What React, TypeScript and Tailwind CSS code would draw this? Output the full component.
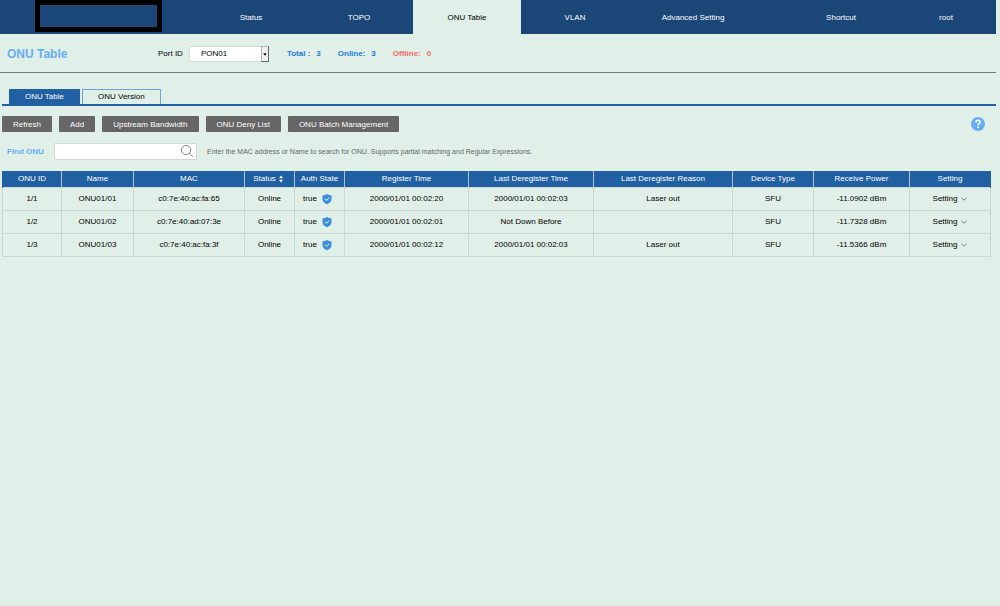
import React, { useState } from 'react';

interface Onu {
  id: string;
  name: string;
  mac: string;
  status: string;
  auth: string;
  registerTime: string;
  deregisterTime: string;
  deregisterReason: string;
  deviceType: string;
  power: string;
}

const ONUS: Onu[] = [
  {
    id: '1/1', name: 'ONU01/01', mac: 'c0:7e:40:ac:fa:65', status: 'Online', auth: 'true',
    registerTime: '2000/01/01 00:02:20', deregisterTime: '2000/01/01 00:02:03',
    deregisterReason: 'Laser out', deviceType: 'SFU', power: '-11.0902 dBm',
  },
  {
    id: '1/2', name: 'ONU01/02', mac: 'c0:7e:40:ad:07:3e', status: 'Online', auth: 'true',
    registerTime: '2000/01/01 00:02:01', deregisterTime: 'Not Down Before',
    deregisterReason: '', deviceType: 'SFU', power: '-11.7328 dBm',
  },
  {
    id: '1/3', name: 'ONU01/03', mac: 'c0:7e:40:ac:fa:3f', status: 'Online', auth: 'true',
    registerTime: '2000/01/01 00:02:12', deregisterTime: '2000/01/01 00:02:03',
    deregisterReason: 'Laser out', deviceType: 'SFU', power: '-11.5366 dBm',
  },
];

const NAV = [
  { label: 'Status', className: 'w-[108px] text-white' },
  { label: 'TOPO', className: 'w-[108px] text-white' },
  { label: 'ONU Table', className: 'w-[108px] bg-[#e0efe7] text-black' },
  { label: 'VLAN', className: 'w-[108px] text-white' },
  { label: 'Advanced Setting', className: 'w-[128px] text-white' },
  { label: 'Shortcut', className: 'w-[110px] ml-auto text-white' },
  { label: 'root', className: 'w-[100px] text-white' },
];

const ACTIONS = ['Refresh', 'Add', 'Upstream Bandwidth', 'ONU Deny List', 'ONU Batch Management'];

const COLUMNS = [
  { label: 'ONU ID', width: 'w-[59px]' },
  { label: 'Name', width: 'w-[72px]' },
  { label: 'MAC', width: 'w-[111px]' },
  { label: 'Status', width: 'w-[50px]', sortable: true },
  { label: 'Auth State', width: 'w-[50px]' },
  { label: 'Register Time', width: 'w-[124px]' },
  { label: 'Last Deregister Time', width: 'w-[125px]' },
  { label: 'Last Deregister Reason', width: 'w-[139px]' },
  { label: 'Device Type', width: 'w-[81px]' },
  { label: 'Receive Power', width: 'w-[96px]' },
  { label: 'Setting', width: 'w-[81px]' },
];

const SortIcon = () => (
  <svg viewBox="0 0 6 8" className="w-[6px] h-2" fill="currentColor" aria-hidden="true">
    <path d="M3 0.6 5 3.2H1z" />
    <path d="M3 7.4 1 4.8h4z" />
  </svg>
);

const ShieldIcon = () => (
  <svg viewBox="0 0 10 12" className="w-[10px] h-3" aria-hidden="true">
    <path
      d="M5 0.9C6.2 1.8 7.8 2.1 9.5 2.2V6c0 2.5-1.8 4.2-4.5 5.2C2.3 10.2 0.5 8.5 0.5 6V2.2C2.2 2.1 3.8 1.8 5 0.9z"
      fill="#3a8de0"
    />
    <path d="M3 5.9 4.5 7.3 7.1 4.8" fill="none" stroke="#fff" strokeWidth="1" />
  </svg>
);

const SearchIcon = () => (
  <svg viewBox="0 0 14 14" className="w-[14px] h-[14px]" fill="none" stroke="#777" strokeWidth="0.9" aria-hidden="true">
    <circle cx="6" cy="6" r="4.6" />
    <path d="M9.3 9.3 13 12.8" />
  </svg>
);

const HelpIcon = () => (
  <svg viewBox="0 0 14 14" className="w-[14px] h-[14px]" aria-hidden="true">
    <circle cx="7" cy="7" r="7" fill="#67adf3" />
    <path
      d="M4.9 5.4C4.9 4.1 5.8 3.3 7 3.3s2.1 0.8 2.1 1.9c0 1.4-2 1.5-2 3"
      fill="none"
      stroke="#fff"
      strokeWidth="1.5"
    />
    <circle cx="7.1" cy="10.2" r="0.9" fill="#fff" />
  </svg>
);

const ChevronIcon = () => (
  <svg viewBox="0 0 6 4" className="w-[6px] h-1" fill="none" stroke="#555" strokeWidth="0.7" aria-hidden="true">
    <path d="M0.5 0.8 3 3.2 5.5 0.8" />
  </svg>
);

export default function App() {
  const [port, setPort] = useState('PON01');
  const [search, setSearch] = useState('');
  const [tab, setTab] = useState('ONU Table');
  const [descending, setDescending] = useState(false);

  const rows = ONUS.filter(onu =>
    `${onu.mac} ${onu.name}`.toLowerCase().includes(search.toLowerCase())
  );
  if (descending) rows.reverse();

  return (
    <div className="min-h-screen bg-[#e0efe7] pr-1 font-['Liberation_Sans',Arial,sans-serif] text-[8px] leading-3 text-black">
      <header className="flex h-[34px] bg-[#1a4777]">
        <div className="w-[197px] shrink-0 pl-[35px]">
          <div className="h-8 w-[127px] border-[5px] border-black" />
        </div>
        <nav className="flex flex-1">
          {NAV.map(item => (
            <a key={item.label} href="#" className={`flex items-center justify-center pt-0.5 ${item.className}`}>
              {item.label}
            </a>
          ))}
        </nav>
      </header>

      <div className="flex h-[39px] items-center border-b border-[#6f7c78] pt-0.5 pl-[7px]">
        <h1 className="w-[151px] text-[12px] leading-4 font-bold text-[#67adf3]">ONU Table</h1>
        <label htmlFor="port">Port ID</label>
        <div className="relative ml-[6px] h-4 w-20">
          <select
            id="port"
            value={port}
            onChange={e => setPort(e.target.value)}
            className="h-full w-full appearance-none rounded-[1px] border border-[#d5dcd8] bg-white pl-[11px]"
          >
            <option>PON01</option>
            <option>PON02</option>
          </select>
          <span className="pointer-events-none absolute inset-y-0 right-0 flex w-2 items-center justify-center border border-[#b5b5b5] border-r-[#666] border-b-[#666] bg-[#f0f0f0]">
            <svg viewBox="0 0 4 3" className="h-[3px] w-1" aria-hidden="true">
              <path d="M0.3 0.3h3.4L2 2.7z" fill="#000" />
            </svg>
          </span>
        </div>
        <div className="ml-[18px] flex gap-[17px] font-bold text-[#1b7cd8]">
          <span className="flex gap-1.5"><span>Total :</span><span>3</span></span>
          <span className="flex gap-1.5"><span>Online:</span><span>3</span></span>
          <span className="flex gap-1.5 text-[#f56c6c]"><span>Offline:</span><span>0</span></span>
        </div>
      </div>

      <main className="pl-0.5">
        <div role="tablist" className="mt-4 flex gap-0.5 border-b-2 border-[#2160a3] pl-[7px]">
          {['ONU Table', 'ONU Version'].map(name => (
            <button
              key={name}
              role="tab"
              aria-selected={tab === name}
              onClick={() => setTab(name)}
              className={`h-[15px] rounded-t-[1px] border border-b-0 px-[15px] ${
                tab === name ? 'border-[#2160a3] bg-[#2160a3] text-white' : 'border-[#6fa3d0]'
              }`}
            >
              {name}
            </button>
          ))}
        </div>

        <div className="mt-[10px] flex h-4 items-center gap-[7px] pr-[11px]">
          {ACTIONS.map(action => (
            <button key={action} className="h-4 rounded-[1px] bg-[#666] px-[11px] pt-px text-white">
              {action}
            </button>
          ))}
          <button aria-label="Help" className="ml-auto">
            <HelpIcon />
          </button>
        </div>

        <div className="mt-[11px] flex items-center pl-[5px]">
          <label htmlFor="find" className="w-[47px] font-bold text-[#67adf3]">Find ONU</label>
          <div className="relative h-[17px] w-[143px]">
            <input
              id="find"
              type="text"
              value={search}
              onChange={e => setSearch(e.target.value)}
              className="h-full w-full rounded-[1px] border border-[#d0d8d4] bg-white pr-5 pl-1"
            />
            <button aria-label="Search" className="absolute top-px right-[3px]">
              <SearchIcon />
            </button>
          </div>
          <p className="ml-[10px] text-[7px] text-[#666]">
            Enter the MAC address or Name to search for ONU. Supports partial matching and Regular Expressions.
          </p>
        </div>

        <div className="mt-[11px] pr-[5px]">
          <table className="w-full table-fixed border-collapse text-center">
            <thead>
              <tr className="h-4 bg-[#2160a3] text-white">
                {COLUMNS.map(col => (
                  <th
                    key={col.label}
                    className={`${col.width} border-x border-[#a9c3d8] p-0 font-normal first:border-l-[#2160a3] last:border-r-[#2160a3]`}
                  >
                    {col.sortable ? (
                      <button
                        onClick={() => setDescending(!descending)}
                        className="flex w-full items-center justify-center gap-0.5 pr-0.5"
                      >
                        {col.label} <SortIcon />
                      </button>
                    ) : (
                      col.label
                    )}
                  </th>
                ))}
              </tr>
            </thead>
            <tbody>
              {rows.map(onu => (
                <tr key={onu.id} className="h-[23px] *:border *:border-[#cbd6d0] *:p-0">
                  <td>{onu.id}</td>
                  <td>{onu.name}</td>
                  <td>{onu.mac}</td>
                  <td>{onu.status}</td>
                  <td>
                    <span className="flex items-center justify-center gap-[5px] pr-1">
                      {onu.auth} <ShieldIcon />
                    </span>
                  </td>
                  <td>{onu.registerTime}</td>
                  <td>{onu.deregisterTime}</td>
                  <td>{onu.deregisterReason}</td>
                  <td>{onu.deviceType}</td>
                  <td>{onu.power}</td>
                  <td>
                    <button aria-haspopup="menu" className="flex w-full items-center justify-center gap-1">
                      Setting <ChevronIcon />
                    </button>
                  </td>
                </tr>
              ))}
            </tbody>
          </table>
        </div>
      </main>
    </div>
  );
}
